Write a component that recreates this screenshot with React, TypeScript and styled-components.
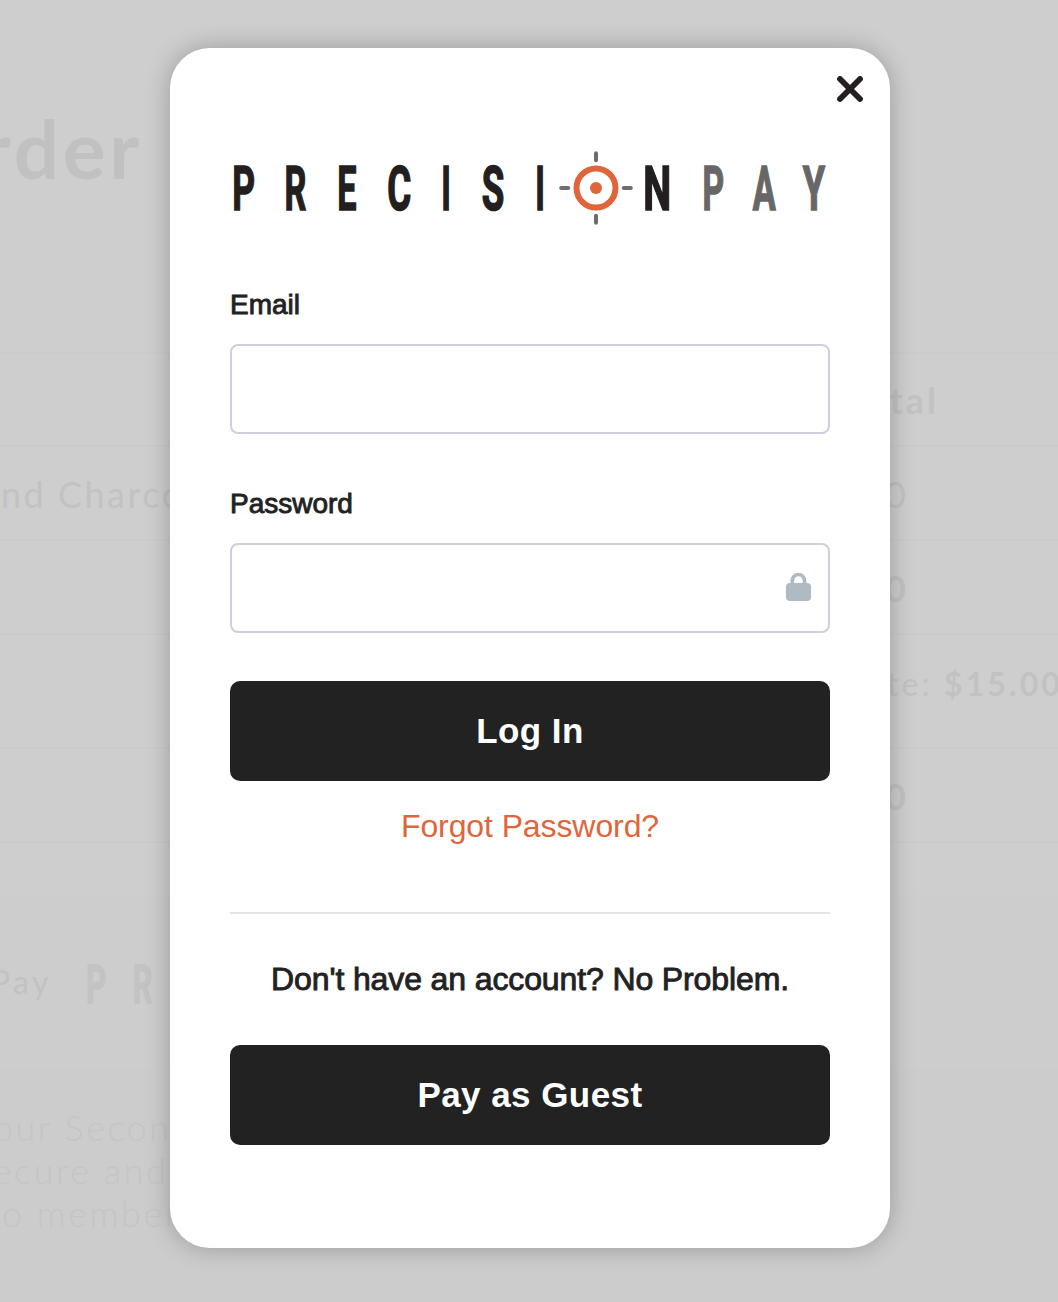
import React from "react";
import styled, { createGlobalStyle } from "styled-components";

const GlobalStyle = createGlobalStyle`
  *, *::before, *::after { box-sizing: border-box; }
  html, body { margin: 0; padding: 0; background: #cccccc; overflow: hidden; }
  body { font-family: "Liberation Sans", Arial, sans-serif; }
`;

const Screen = styled.div`
  display: grid;
  width: 1058px;
  height: 1302px;
  overflow: hidden;
  & > * { grid-area: 1 / 1; }
`;

const Page = styled.div`
  font-family: Lato, sans-serif;
  color: #c2c2c2;
  letter-spacing: 3px;
  font-size: 36px;
  white-space: nowrap;
  overflow: hidden;
  min-width: 0;
`;

const Title = styled.h1`
  margin: 0;
  height: 352px;
  width: 143px;
  padding-top: 99px;
  display: flex;
  justify-content: flex-end;
  font-size: 80px;
  line-height: 98px;
  letter-spacing: 3.8px;
  font-weight: 700;
  background: #cecece;
  color: #c1c1c1;
`;

const Head = styled.div`
  background: #cecece;
`;

const Row = styled.div<{ $height: number; $right?: number; $lift?: number }>`
  height: ${(p) => p.$height}px;
  padding-top: 1px;
  padding-right: ${(p) => p.$right ?? 0}px;
  padding-bottom: ${(p) => p.$lift ?? 0}px;
  border-top: 2px solid #cbcbcb;
  background: #cecece;
  display: flex;
  align-items: center;
  justify-content: space-between;
`;

const Value = styled.span<{ $bold?: boolean }>`
  margin-left: auto;
  font-weight: ${(p) => (p.$bold ? 700 : 400)};
`;

const Rate = styled.span`
  margin-left: auto;
  margin-right: -5px;
  font-size: 32px;
  letter-spacing: 3.1px;
`;

const Item = styled.span`
  padding-left: 1px;
  letter-spacing: 2.5px;
`;

const Method = styled.div`
  height: 174px;
  background: #cdcdcd;
  display: flex;
  align-items: center;
  font-size: 32px;
  svg { margin-top: 6px; }
`;

const MethodName = styled.span`
  margin-left: -9px;
  width: 93px;
  letter-spacing: 3.4px;
`;

const Notes = styled.div`
  padding-top: 38px;
  height: 234px;
  background: #cccccc;
  color: #c5c5c5;
  font-weight: 300;
  line-height: 43px;
  letter-spacing: 2.5px;
`;

const NoteLine = styled.div<{ $shift: number }>`
  margin-left: ${(p) => p.$shift}px;
`;

const Backdrop = styled.div`
  z-index: 1;
  padding: 48px 168px 0 170px;
`;

const Dialog = styled.section`
  width: 720px;
  height: 1200px;
  padding: 28px 60px 0;
  border-radius: 40px;
  background: #fff;
  color: #222;
  box-shadow: 0 0 24px rgba(0, 0, 0, 0.25);
  display: flex;
  flex-direction: column;
`;

const Close = styled.button`
  align-self: flex-end;
  width: 26px;
  height: 26px;
  margin-right: -33px;
  padding: 0;
  border: 0;
  background: none;
  svg { display: block; }
`;

const Brand = styled.div`
  height: 76px;
  margin-top: 48px;
  svg { display: block; }
`;

const Label = styled.label`
  font-size: 28px;
  line-height: 32px;
  -webkit-text-stroke: 0.9px #222;
`;

const Field = styled.div`
  height: 90px;
  margin-top: 23px;
  border: 2px solid #cdd0dc;
  border-radius: 8px;
  display: flex;
  align-items: center;
  padding-right: 17px;
`;

const Input = styled.input`
  flex: 1;
  height: 100%;
  min-width: 0;
  border: 0;
  outline: 0;
  background: transparent;
  font-size: 28px;
  padding: 0 20px;
`;

const FormGroup = styled.div<{ $top: number }>`
  margin-top: ${(p) => p.$top}px;
  display: flex;
  flex-direction: column;
`;

const Button = styled.button<{ $top: number }>`
  height: 100px;
  flex-shrink: 0;
  margin-top: ${(p) => p.$top}px;
  padding: 0;
  border: 0;
  border-radius: 10px;
  background: #222;
  color: #fff;
  font: 700 35px "Liberation Sans", Arial, sans-serif;
  letter-spacing: 0.45px;
`;

const Forgot = styled.a`
  margin-top: 27px;
  text-align: center;
  font-size: 32px;
  line-height: 36px;
  letter-spacing: -0.1px;
  color: #e0653a;
`;

const Divider = styled.hr`
  width: 100%;
  height: 2px;
  margin: 68px 0 0;
  border: 0;
  background: #e5e5e5;
`;

const Prompt = styled.p`
  margin: 47px 0 0;
  text-align: center;
  font-size: 32px;
  line-height: 36px;
  letter-spacing: -0.12px;
  white-space: nowrap;
  -webkit-text-stroke: 0.9px #222;
`;

// Each wordmark letter: character, left edge, horizontal scale, grey or black.
const letters: [string, number, number, boolean?][] = [
  ["P", 2.2, 0.58],
  ["R", 54.6, 0.56],
  ["E", 107.2, 0.56],
  ["C", 157.2, 0.6],
  ["I", 211.3, 0.54],
  ["S", 251.7, 0.6],
  ["I", 305.2, 0.54],
  ["N", 413.2, 0.65],
  ["P", 472.6, 0.55, true],
  ["A", 522.8, 0.56, true],
  ["Y", 572.8, 0.59, true],
];

const Wordmark = ({ scale = 1, tint }: { scale?: number; tint?: string }) => (
  <svg width={600 * scale} height={76 * scale} viewBox="0 0 600 76" aria-label="PrecisionPay">
    <g fontFamily="Roboto, sans-serif" fontWeight="700" fontSize="61" strokeWidth="1.6" letterSpacing="0">
      {letters.map(([ch, x, sx, grey], i) => {
        const color = tint ?? (grey ? "#676767" : "#231f20");
        return (
          <text key={i} transform={`translate(${x} 59.7) scale(${sx} 1)`} fill={color} stroke={color}>
            {ch}
          </text>
        );
      })}
    </g>
    <circle cx="366" cy="38" r="19.5" fill="none" stroke={tint ?? "#e0653a"} strokeWidth="6" />
    <circle cx="366" cy="38" r="6" fill={tint ?? "#e0653a"} />
    <path
      d="M366 3.2v7M366 65.8v7M331.2 38h7M393.8 38h7"
      stroke={tint ?? "#6d6d6d"}
      strokeWidth="4"
      strokeLinecap="round"
    />
  </svg>
);

const Lock = () => (
  <svg width="25" height="32" viewBox="0 0 25 32">
    <path d="M6.3 13V8.6a6.1 6.1 0 0 1 12.2 0V13" fill="none" stroke="#b0bac5" strokeWidth="3.6" />
    <rect y="11" width="25" height="18" rx="4" fill="#b0bac5" />
  </svg>
);

export default function App() {
  return (
    <>
      <GlobalStyle />
      <Screen>
        <Page aria-hidden="true">
          <Head>
            <Title>rder</Title>
          </Head>
          <Row $height={93} $right={119}>
            <Value $bold>Total</Value>
          </Row>
          <Row $height={94} $right={149}>
            <Item>nd Charcoal</Item>
            <Value>$15.00</Value>
          </Row>
          <Row $height={94} $right={149}>
            <Value $bold>$15.00</Value>
          </Row>
          <Row $height={114} $lift={16}>
            <Rate>
              Flat rate: <b>$15.00</b>
            </Rate>
          </Row>
          <Row $height={94} $right={149}>
            <Value $bold>$30.00</Value>
          </Row>
          <Row $height={53} />
          <Method>
            <MethodName>Pay</MethodName>
            <Wordmark scale={0.89} tint="#c3c3c3" />
          </Method>
          <Notes>
            <NoteLine $shift={-7}>our Second</NoteLine>
            <NoteLine $shift={-7}>ecure and</NoteLine>
            <NoteLine $shift={2}>o member</NoteLine>
          </Notes>
        </Page>
        <Backdrop>
          <Dialog role="dialog">
            <Close aria-label="Close">
              <svg width="26" height="26" viewBox="0 0 26 26">
                <path d="M3 3l20 20M23 3L3 23" stroke="#231f20" strokeWidth="5.8" strokeLinecap="round" />
              </svg>
            </Close>
            <Brand>
              <Wordmark />
            </Brand>
            <FormGroup $top={63}>
              <Label htmlFor="email">Email</Label>
              <Field>
                <Input id="email" type="email" />
              </Field>
            </FormGroup>
            <FormGroup $top={54}>
              <Label htmlFor="password">Password</Label>
              <Field>
                <Input id="password" type="password" />
                <Lock />
              </Field>
            </FormGroup>
            <Button $top={48}>Log In</Button>
            <Forgot>Forgot Password?</Forgot>
            <Divider />
            <Prompt>Don't have an account? No Problem.</Prompt>
            <Button $top={48}>Pay as Guest</Button>
          </Dialog>
        </Backdrop>
      </Screen>
    </>
  );
}
